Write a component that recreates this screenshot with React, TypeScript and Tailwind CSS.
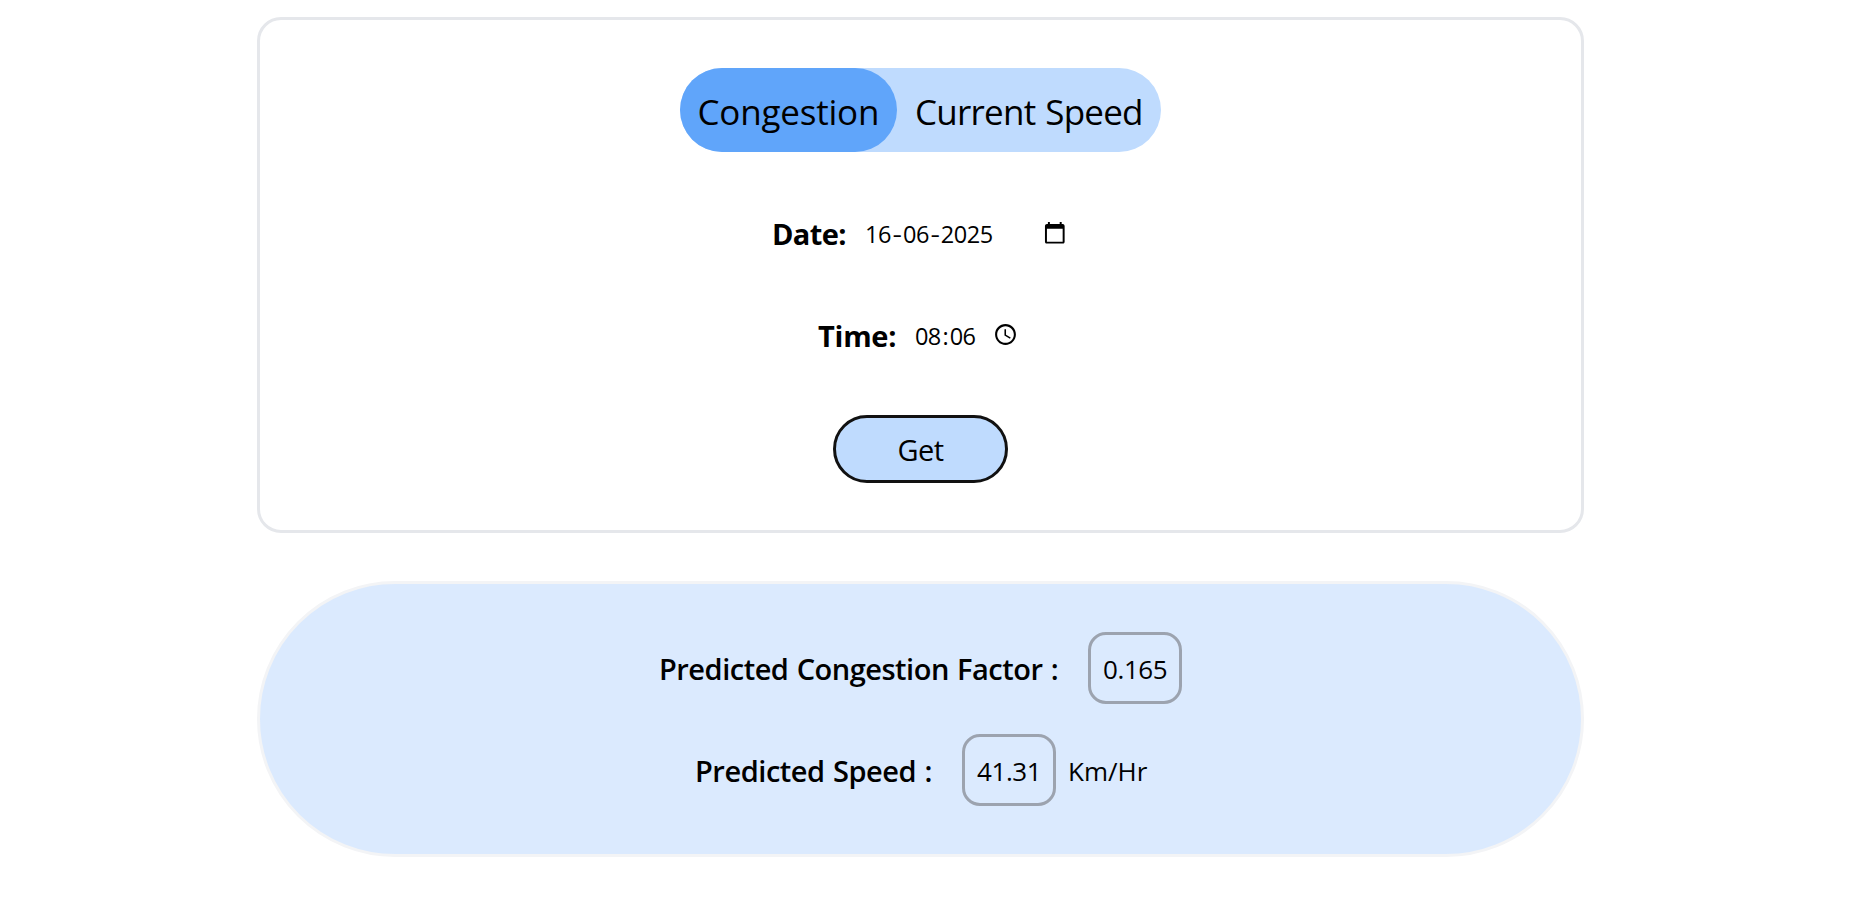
import React from "react";

function CalendarIcon() {
  return (
    <svg viewBox="0 0 24 24" className="-mt-px h-[23.6px] w-[23.6px] shrink-0" fill="#000">
      <path d="M20 3h-1V1h-2v2H7V1H5v2H4c-1.1 0-2 .9-2 2v16c0 1.1.9 2 2 2h16c1.1 0 2-.9 2-2V5c0-1.1-.9-2-2-2zm0 18H4V8h16v13z" />
    </svg>
  );
}

function ClockIcon() {
  return (
    <svg viewBox="0 0 24 24" className="-mt-px h-[25px] w-[25px] shrink-0" fill="#000">
      <path d="M11.99 2C6.47 2 2 6.48 2 12s4.47 10 9.99 10C17.52 22 22 17.52 22 12S17.52 2 11.99 2zM12 20c-4.42 0-8-3.58-8-8s3.58-8 8-8 8 3.58 8 8-3.58 8-8 8z" />
      <path d="M12.5 7H11v6l5.25 3.15.75-1.23-4.5-2.67z" />
    </svg>
  );
}

function ValueBox({ value }: { value: string }) {
  return (
    <div className="flex h-[72px] w-[94px] shrink-0 items-center rounded-[18px] border-3 border-[#9ca3af] pt-[3px] pl-3 text-[26px] tracking-[-0.4px]">
      {value}
    </div>
  );
}

export default function App() {
  return (
    <div className="flex h-[915px] w-[1841px] flex-col items-center bg-white pt-[17px] font-['Open_Sans','Noto_Sans',sans-serif] whitespace-nowrap text-black">
      <section className="flex h-[516px] w-[1327px] shrink-0 flex-col items-center rounded-3xl border-3 border-[#e5e7eb] pt-12">
        <div className="flex h-[84px] w-[481px] shrink-0 rounded-full bg-[#bfdbfe] text-[35px]">
          <button className="flex w-[217px] items-center rounded-full bg-[#60a5fa] pt-1 pl-[17.5px] tracking-[-0.2px]">
            Congestion
          </button>
          <button className="flex w-[264px] items-center pt-1 pl-[18px] tracking-[-0.76px] [word-spacing:1.5px]">
            Current Speed
          </button>
        </div>

        <div className="mt-[45px] flex h-[72px] w-[297px] shrink-0 items-center">
          <label className="w-[93px] shrink-0 pt-0.5 text-[29px] font-bold tracking-[-0.6px]">Date:</label>
          <div className="flex w-[177.5px] shrink-0 pt-[3px] text-[23.5px] tracking-[-0.48px]">
            <span>16</span>
            <span className="w-3 scale-x-125 text-center">-</span>
            <span>06</span>
            <span className="w-3 scale-x-125 text-center">-</span>
            <span>2025</span>
          </div>
          <CalendarIcon />
        </div>

        <div className="mt-[30px] flex h-[72px] w-[205px] shrink-0 items-center">
          <label className="w-[97px] shrink-0 pt-0.5 text-[29px] font-bold tracking-[-0.25px]">Time:</label>
          <div className="flex w-[78px] shrink-0 pt-[3px] text-[23.5px] tracking-[-0.6px]">
            <span>08</span>
            <span className="w-[9px] text-center">:</span>
            <span>06</span>
          </div>
          <ClockIcon />
        </div>

        <button className="mt-[44px] flex h-[68px] w-[175px] shrink-0 items-center justify-center rounded-full border-3 border-[#111] bg-[#bfdbfe] pt-0.5 text-[29px] tracking-[-0.5px]">
          Get
        </button>
      </section>

      <section className="mt-12 flex h-[276px] w-[1327px] shrink-0 flex-col items-center gap-[30px] rounded-full border-3 border-[#f3f4f6] bg-[#dbeafe] pt-12">
        <div className="flex h-[72px] w-[523px] items-center">
          <span className="w-[429px] shrink-0 pt-0.5 text-[29px] font-semibold tracking-[-0.49px] [word-spacing:1.2px]">
            Predicted Congestion Factor :
          </span>
          <ValueBox value="0.165" />
        </div>
        <div className="flex h-[72px] w-[451px] items-center">
          <span className="w-[267px] shrink-0 pt-0.5 text-[29px] font-semibold tracking-[-0.46px] [word-spacing:1.2px]">
            Predicted Speed :
          </span>
          <ValueBox value="41.31" />
          <span className="pt-[3px] pl-3 text-[26px]">Km/Hr</span>
        </div>
      </section>
    </div>
  );
}
